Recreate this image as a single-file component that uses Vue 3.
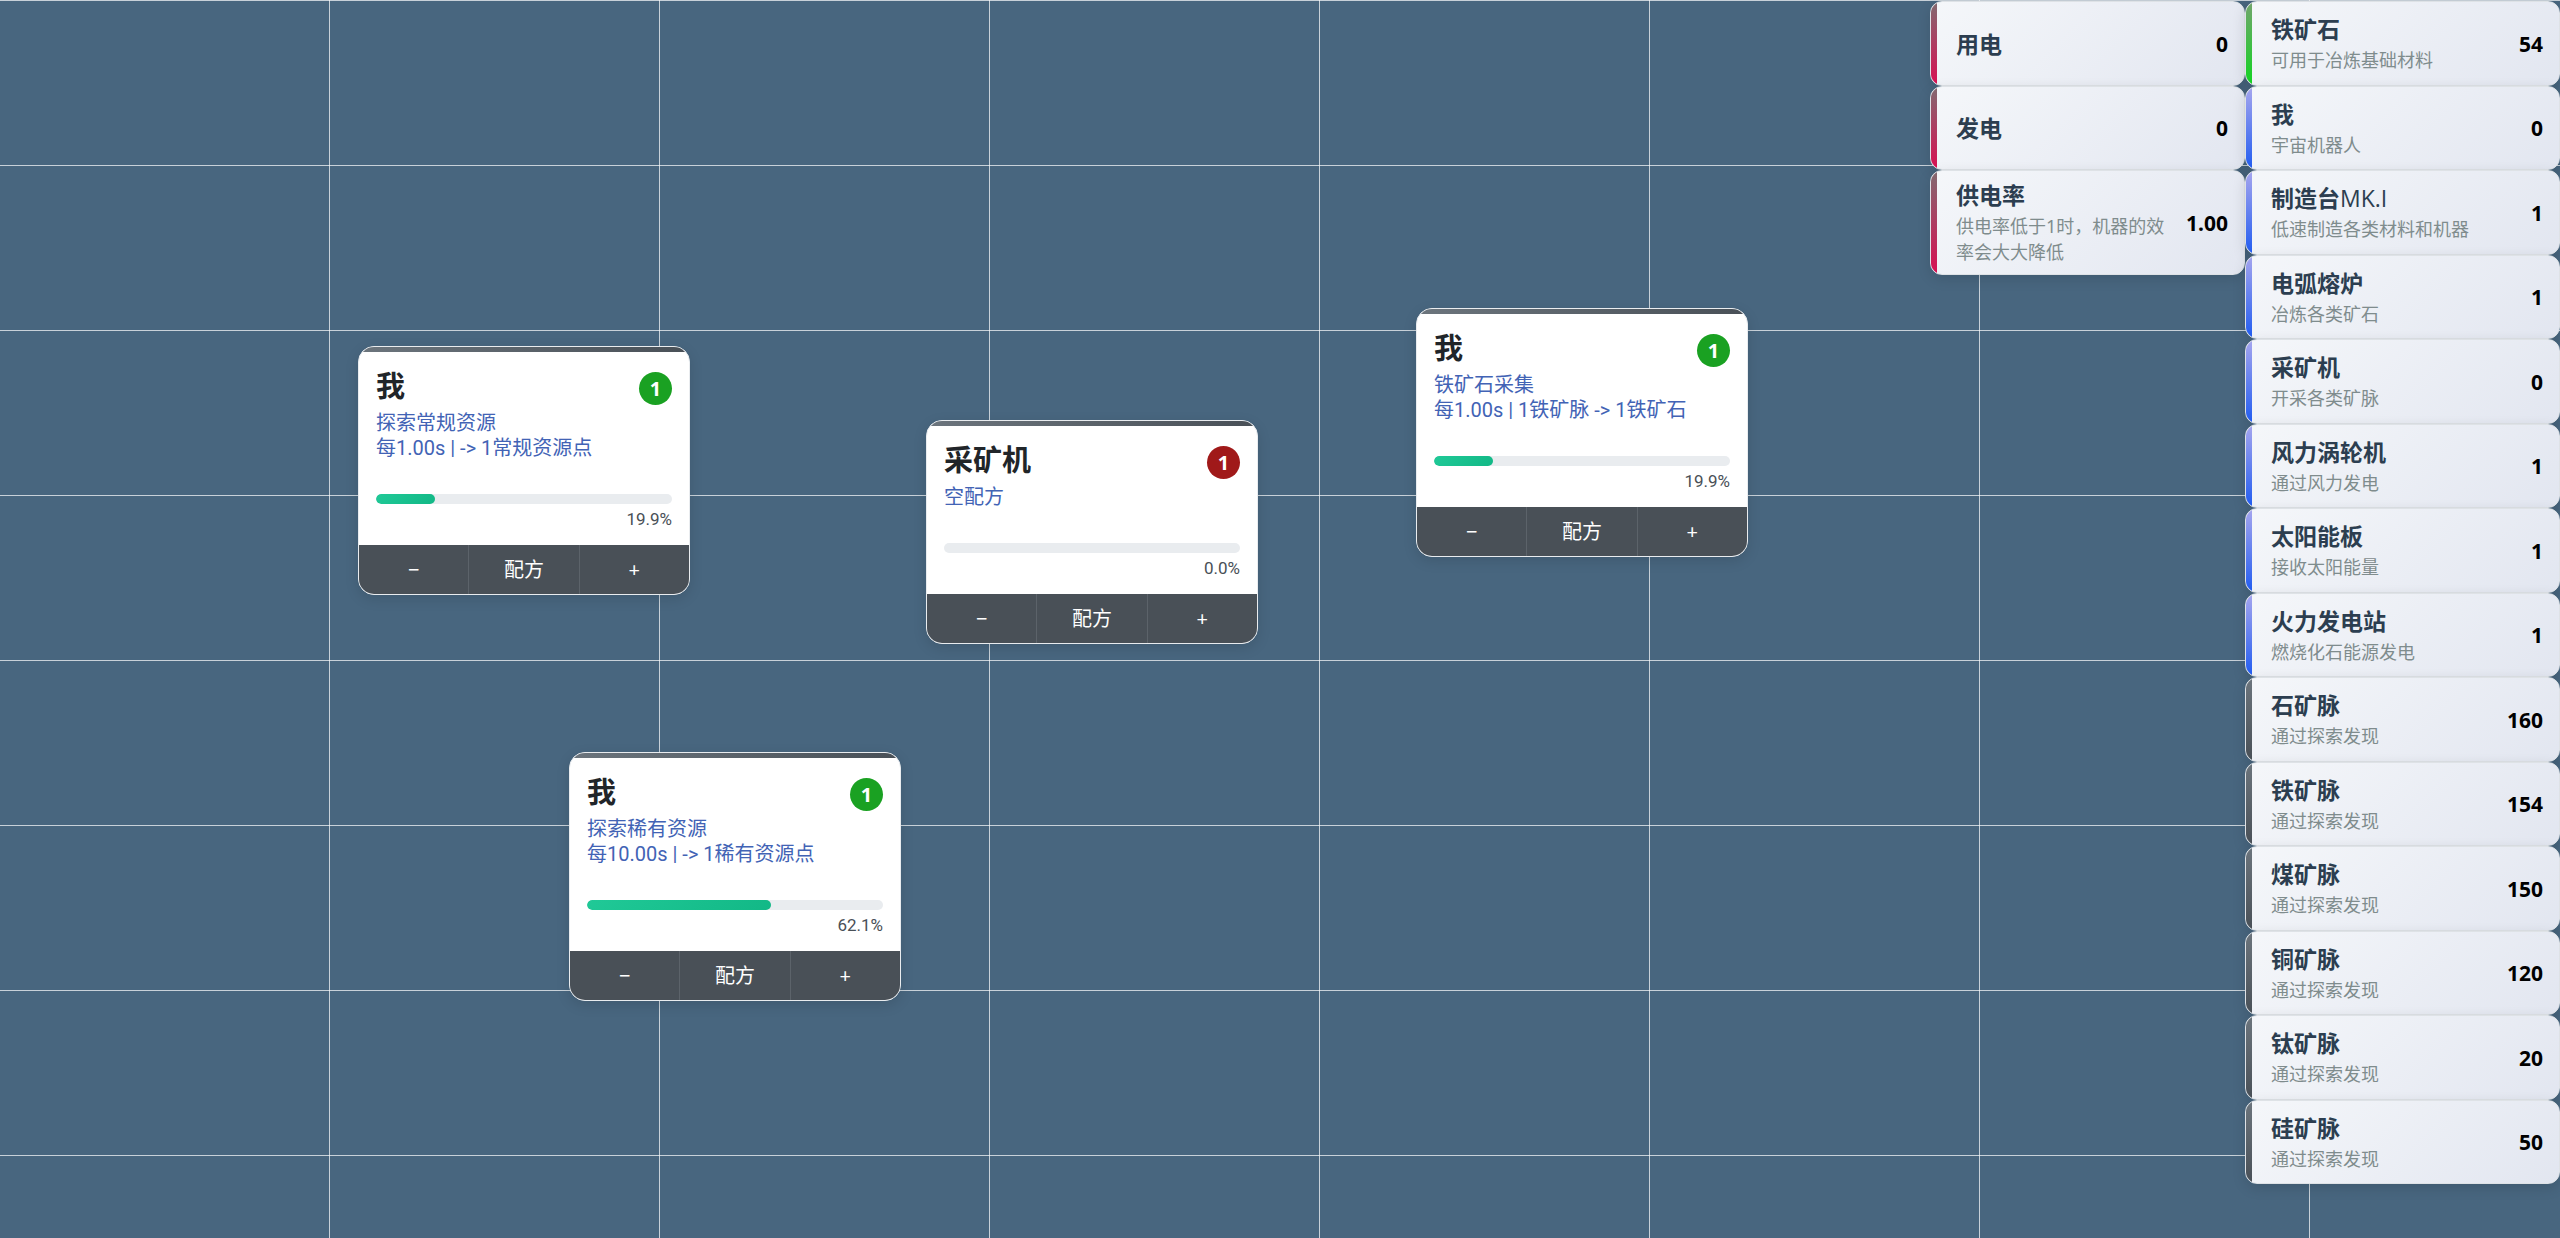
<script setup>
const machines = [
  { id: 1, x: 358, y: 346, name: '我', count: 1, running: true, recipe: ['探索常规资源', '每1.00s | -> 1常规资源点'], progress: 19.9 },
  { id: 2, x: 926, y: 420, name: '采矿机', count: 1, running: false, recipe: ['空配方'], progress: 0 },
  { id: 3, x: 1416, y: 308, name: '我', count: 1, running: true, recipe: ['铁矿石采集', '每1.00s | 1铁矿脉 -> 1铁矿石'], progress: 19.9 },
  { id: 4, x: 569, y: 752, name: '我', count: 1, running: true, recipe: ['探索稀有资源', '每10.00s | -> 1稀有资源点'], progress: 62.1 },
]

const power = [
  { name: '用电', value: '0', kind: 'power' },
  { name: '发电', value: '0', kind: 'power' },
  { name: '供电率', desc: '供电率低于1时，机器的效率会大大降低', value: '1.00', kind: 'power' },
]

const stock = [
  { name: '铁矿石', desc: '可用于冶炼基础材料', value: '54', kind: 'material' },
  { name: '我', desc: '宇宙机器人', value: '0', kind: 'machine' },
  { name: '制造台', model: 'MK.I', desc: '低速制造各类材料和机器', value: '1', kind: 'machine' },
  { name: '电弧熔炉', desc: '冶炼各类矿石', value: '1', kind: 'machine' },
  { name: '采矿机', desc: '开采各类矿脉', value: '0', kind: 'machine' },
  { name: '风力涡轮机', desc: '通过风力发电', value: '1', kind: 'machine' },
  { name: '太阳能板', desc: '接收太阳能量', value: '1', kind: 'machine' },
  { name: '火力发电站', desc: '燃烧化石能源发电', value: '1', kind: 'machine' },
  { name: '石矿脉', desc: '通过探索发现', value: '160', kind: 'vein' },
  { name: '铁矿脉', desc: '通过探索发现', value: '154', kind: 'vein' },
  { name: '煤矿脉', desc: '通过探索发现', value: '150', kind: 'vein' },
  { name: '铜矿脉', desc: '通过探索发现', value: '120', kind: 'vein' },
  { name: '钛矿脉', desc: '通过探索发现', value: '20', kind: 'vein' },
  { name: '硅矿脉', desc: '通过探索发现', value: '50', kind: 'vein' },
]

const columns = [
  { id: 'power', items: power },
  { id: 'stock', items: stock },
]
</script>

<template>
  <main class="board">
    <article
      v-for="m in machines"
      :key="m.id"
      class="card"
      :style="{ left: m.x + 'px', top: m.y + 'px' }"
    >
      <div class="card-strip"></div>
      <div class="card-body">
        <header class="card-head">
          <h2 class="card-title">{{ m.name }}</h2>
          <span class="badge" :class="{ running: m.running }">{{ m.count }}</span>
        </header>
        <p v-for="line in m.recipe" :key="line" class="recipe">{{ line }}</p>
        <div class="track" role="progressbar" :aria-valuenow="m.progress" aria-valuemin="0" aria-valuemax="100">
          <div class="fill" :style="{ width: m.progress + '%' }"></div>
        </div>
        <p class="percent">{{ m.progress.toFixed(1) }}%</p>
      </div>
      <footer class="actions">
        <button type="button" class="action">−</button>
        <button type="button" class="action">配方</button>
        <button type="button" class="action">+</button>
      </footer>
    </article>

    <aside class="panel">
      <ul v-for="col in columns" :key="col.id" class="column">
        <li v-for="item in col.items" :key="item.name" class="item">
          <span class="stripe" :class="item.kind"></span>
          <div class="info">
            <h3 class="name">{{ item.name }}<span v-if="item.model" class="model">{{ item.model }}</span></h3>
            <p v-if="item.desc" class="desc">{{ item.desc }}</p>
          </div>
          <strong class="value">{{ item.value }}</strong>
        </li>
      </ul>
    </aside>
  </main>
</template>

<style>
body {
  margin: 0;
  background: #48667f;
}
</style>

<style scoped>
.board {
  position: relative;
  min-height: 100vh;
  overflow: hidden;
  box-sizing: border-box;
  font-family: "Noto Sans", "Noto Sans CJK SC", sans-serif;
  background-color: #48667f;
  background-image:
    linear-gradient(to bottom, rgba(255, 255, 255, 0.7) 1px, transparent 1px),
    linear-gradient(to left, rgba(255, 255, 255, 0.7) 1px, transparent 1px);
  background-size: 330px 165px;
}

h2,
h3,
p,
ul {
  margin: 0;
  padding: 0;
}

.card {
  position: absolute;
  box-sizing: border-box;
  width: 332px;
  overflow: hidden;
  border: 1px solid #e9ecef;
  border-radius: 16px;
  background: #fff;
  box-shadow: 0 4px 14px rgba(0, 0, 0, 0.12);
}

.card-strip {
  height: 5px;
  background: linear-gradient(90deg, #6c757d, #495057);
}

.card-body {
  padding: 20px 17px 14px 17px;
}

.card-head {
  display: flex;
  justify-content: space-between;
  align-items: flex-start;
  height: 33px;
}

.card-title {
  font-size: 29px;
  line-height: 28px;
  font-weight: 700;
  color: #212529;
}

.badge {
  display: flex;
  align-items: center;
  justify-content: center;
  width: 33px;
  height: 33px;
  border-radius: 50%;
  background: #a01919;
  color: #fff;
  font-size: 20px;
  font-weight: 700;
}

.badge.running {
  background: #1aa122;
}

.recipe {
  font-family: Roboto, "Noto Sans CJK SC", sans-serif;
  font-size: 20px;
  line-height: 25px;
  color: #4263b5;
  white-space: nowrap;
}

.card-head + .recipe {
  margin-top: 6px;
}

.track {
  height: 10px;
  margin-top: 33px;
  border-radius: 5px;
  background: #e9ecef;
  overflow: hidden;
}

.fill {
  height: 100%;
  border-radius: 5px;
  background: linear-gradient(135deg, #20c997, #12b886);
}

.percent {
  margin-top: 3px;
  font-family: Roboto, sans-serif;
  font-size: 17px;
  line-height: 24px;
  color: #495057;
  text-align: right;
}

.actions {
  display: flex;
  background: #495057;
}

.action {
  flex: 1;
  height: 49px;
  padding: 0;
  border: 0;
  border-left: 1px solid #5c636a;
  background: none;
  color: #fff;
  font-family: inherit;
  font-size: 20px;
  line-height: 28px;
}

.action:first-child {
  border-left: 0;
}

.panel {
  position: absolute;
  top: 1px;
  right: 0;
  display: flex;
  align-items: flex-start;
}

.column {
  width: 315px;
  list-style: none;
}

.item {
  position: relative;
  display: flex;
  align-items: center;
  gap: 16px;
  box-sizing: border-box;
  min-height: 84px;
  padding: 9px 16px 9px 25px;
  overflow: hidden;
  border: 1px solid #dee2e6;
  border-radius: 12px;
  background: linear-gradient(135deg, #f5f7fa, #e2e6f0);
  box-shadow: 0 4px 14px rgba(0, 0, 0, 0.12);
}

.item:nth-child(odd) {
  min-height: 85px;
}

.stripe {
  position: absolute;
  top: 0;
  bottom: 0;
  left: 0;
  width: 6px;
}

.stripe.power {
  background: linear-gradient(#826a70, #d80f52);
}

.stripe.material {
  background: linear-gradient(#72a56c, #12d422);
}

.stripe.machine {
  background: linear-gradient(#a6a6ee, #215cf0);
}

.stripe.vein {
  background: linear-gradient(#6c757d, #495057);
}

.info {
  flex: 1;
}

.name {
  font-size: 23px;
  line-height: 30px;
  font-weight: 700;
  color: #2c3e50;
}

.model {
  font-family: "Open Sans", sans-serif;
  font-weight: 500;
}

.desc {
  margin-top: 3px;
  font-size: 18px;
  line-height: 26px;
  color: #7f8c8d;
}

.value {
  font-size: 21px;
  line-height: 28px;
  font-weight: 700;
  color: #000;
}
</style>
